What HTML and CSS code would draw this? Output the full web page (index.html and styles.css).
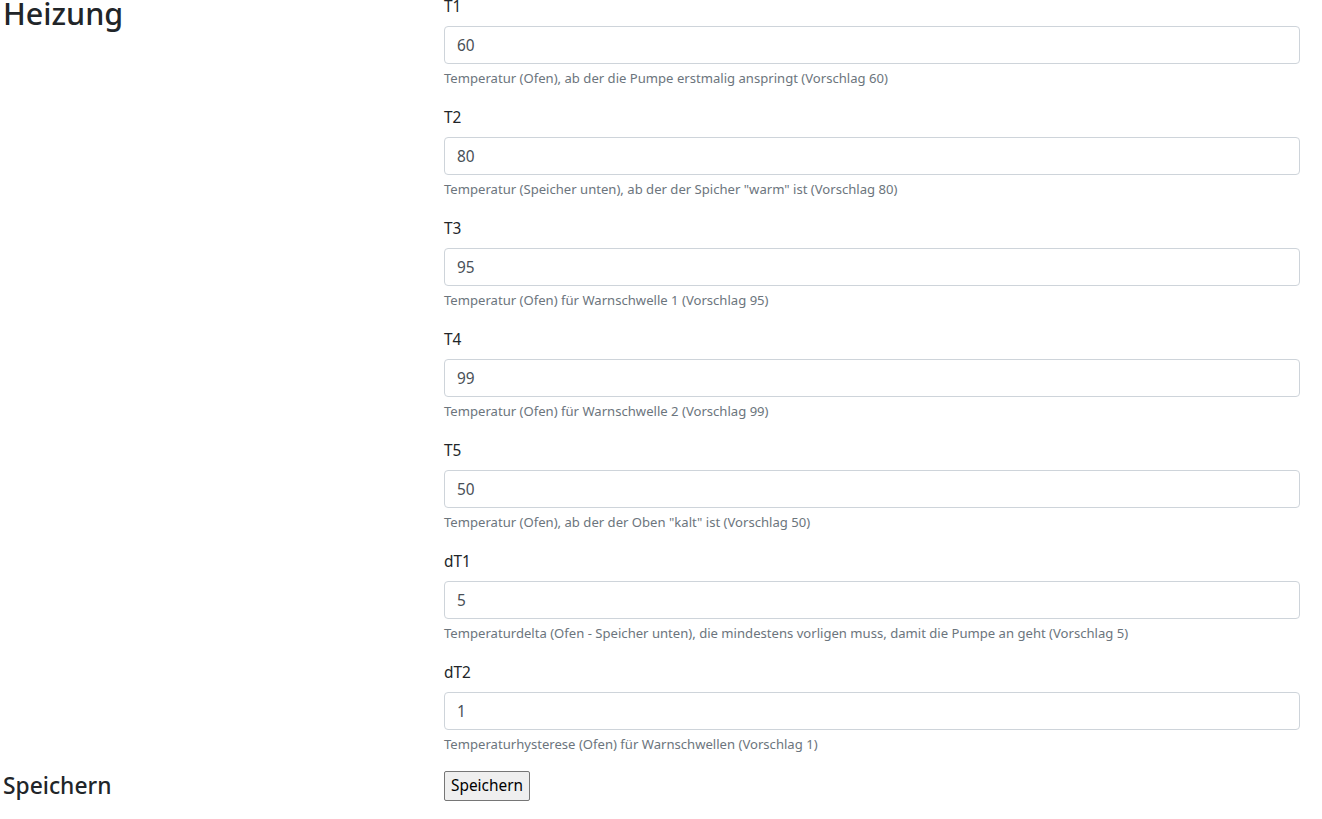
FILE: index.html
```html
<!DOCTYPE html>
<html lang="de">
<head>
<meta charset="utf-8">
<title>Heizung</title>
<link rel="stylesheet" href="styles.css">
</head>
<body>
<div class="page">
  <div class="row">
    <div class="side"><h2 class="title">Heizung</h2></div>
    <div class="main">
      <div class="form-group">
        <label for="t1">T1</label>
        <input id="t1" class="form-control" type="text" value="60">
        <small class="help">Temperatur (Ofen), ab der die Pumpe erstmalig anspringt (Vorschlag 60)</small>
      </div>
      <div class="form-group">
        <label for="t2">T2</label>
        <input id="t2" class="form-control" type="text" value="80">
        <small class="help">Temperatur (Speicher unten), ab der der Spicher "warm" ist (Vorschlag 80)</small>
      </div>
      <div class="form-group">
        <label for="t3">T3</label>
        <input id="t3" class="form-control" type="text" value="95">
        <small class="help">Temperatur (Ofen) für Warnschwelle 1 (Vorschlag 95)</small>
      </div>
      <div class="form-group">
        <label for="t4">T4</label>
        <input id="t4" class="form-control" type="text" value="99">
        <small class="help">Temperatur (Ofen) für Warnschwelle 2 (Vorschlag 99)</small>
      </div>
      <div class="form-group">
        <label for="t5">T5</label>
        <input id="t5" class="form-control" type="text" value="50">
        <small class="help">Temperatur (Ofen), ab der der Oben "kalt" ist (Vorschlag 50)</small>
      </div>
      <div class="form-group">
        <label for="dt1">dT1</label>
        <input id="dt1" class="form-control" type="text" value="5">
        <small class="help">Temperaturdelta (Ofen - Speicher unten), die mindestens vorligen muss, damit die Pumpe an geht (Vorschlag 5)</small>
      </div>
      <div class="form-group">
        <label for="dt2">dT2</label>
        <input id="dt2" class="form-control" type="text" value="1">
        <small class="help">Temperaturhysterese (Ofen) für Warnschwellen (Vorschlag 1)</small>
      </div>
    </div>
  </div>
  <div class="row">
    <div class="side"><h4 class="subtitle">Speichern</h4></div>
    <div class="main">
      <button type="button" class="btn">Speichern</button>
    </div>
  </div>
</div>
</body>
</html>
```
FILE: styles.css
```css
html, body {
  margin: 0;
  padding: 0;
  background: #fff;
}
body {
  font-family: "Noto Sans", "Open Sans", sans-serif;
  font-size: 15.4px;
  line-height: 24px;
  color: #212529;
}
.page {
  margin-top: -6px;
  padding: 0 22px 0 3px;
}
.row {
  display: grid;
  grid-template-columns: 441px 1fr;
}
.title {
  margin: 0;
  font-size: 30.5px;
  font-weight: 500;
  line-height: 38px;
}
.subtitle {
  margin: 0;
  font-size: 22.8px;
  font-weight: 500;
  line-height: 29px;
}
.form-group {
  display: flex;
  flex-direction: column;
  align-items: flex-start;
  margin-bottom: 16px;
}
.form-group label {
  display: inline-block;
  margin-top: 1px;
  margin-bottom: 7px;
}
.form-control {
  box-sizing: border-box;
  width: 100%;
  height: 38px;
  padding: 6px 12px;
  font: inherit;
  color: #495057;
  background: #fff;
  border: 1px solid #ced4da;
  border-radius: 4px;
}
.help {
  display: block;
  margin-top: 4px;
  font-size: 13.1px;
  line-height: 21px;
  color: #6c757d;
}
.btn {
  font: inherit;
  line-height: 24px;
  padding: 2px 6px;
  color: #000;
  background: #efefef;
  border: 1px solid #767676;
  border-radius: 2px;
}
```
